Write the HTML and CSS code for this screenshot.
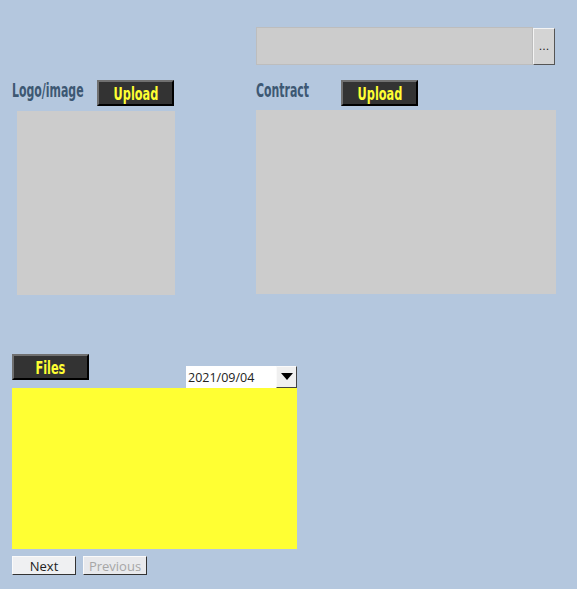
FILE: index.html
```html
<!DOCTYPE html>
<html>
<head>
<meta charset="utf-8">
<link rel="stylesheet" href="styles.css">
</head>
<body>
<div class="page">
  <div class="top-row">
    <div class="path-field"></div>
    <button class="browse">...</button>
  </div>
  <div class="uploads">
    <div class="col col-left">
      <div class="label-row">
        <span class="label-box"><span class="label">Logo/image</span></span>
        <button class="dark-btn"><span class="squeeze">Upload</span></button>
      </div>
      <div class="preview preview-logo"></div>
    </div>
    <div class="col col-right">
      <div class="label-row">
        <span class="label-box"><span class="label">Contract</span></span>
        <button class="dark-btn"><span class="squeeze">Upload</span></button>
      </div>
      <div class="preview preview-contract"></div>
    </div>
  </div>
  <div class="files">
    <div class="files-head">
      <button class="dark-btn files-btn"><span class="squeeze">Files</span></button>
      <div class="date-select">
        <span class="date-text">2021/09/04</span>
        <span class="date-arrow"><svg width="12" height="8" viewBox="0 0 12 8"><path d="M0 0 L12 0 L6 7 Z" fill="#000"/></svg></span>
      </div>
    </div>
    <div class="file-list"></div>
    <div class="nav">
      <button class="nav-btn">Next</button>
      <button class="nav-btn disabled">Previous</button>
    </div>
  </div>
</div>
</body>
</html>
```
FILE: styles.css
```css
html, body {
  margin: 0;
  padding: 0;
}
body {
  background: #b4c7de;
  width: 577px;
  height: 589px;
  overflow: hidden;
  font-family: "Noto Sans", "DejaVu Sans", sans-serif;
}
.page {
  padding-top: 27px;
}
.top-row {
  display: flex;
  align-items: flex-start;
  margin-left: 256px;
  height: 38px;
}
.path-field {
  width: 275px;
  height: 36px;
  background: #cccccc;
  border: 1px solid #bdbdbd;
}
.browse {
  margin: 1px 0 0 0;
  width: 22px;
  height: 37px;
  padding: 0;
  background: #d4d4d4;
  border: 1px solid;
  border-color: #f4f4f4 #555 #555 #f4f4f4;
  font-family: "DejaVu Sans", sans-serif;
  font-size: 11px;
  color: #222;
  line-height: 30px;
}
.uploads {
  display: flex;
  margin-top: 15px;
}
.col-left {
  margin-left: 12px;
  width: 244px;
}
.label-row {
  display: flex;
  align-items: center;
  height: 26px;
}
.label-box {
  width: 85px;
  height: 26px;
  overflow: visible;
  white-space: nowrap;
}
.label {
  display: inline-block;
  font-family: "DejaVu Sans", sans-serif;
  font-stretch: condensed;
  font-weight: bold;
  font-size: 19px;
  line-height: 20px;
  color: #3d5873;
  transform: scaleX(0.64);
  transform-origin: left center;
}
.dark-btn {
  box-sizing: border-box;
  width: 77px;
  height: 26px;
  padding: 0;
  background: #333333;
  border: 2px solid;
  border-color: #707070 #000 #000 #707070;
  color: #ffff33;
  font-family: "DejaVu Sans", sans-serif;
  font-stretch: condensed;
  font-weight: bold;
  font-size: 18px;
  line-height: 19px;
  white-space: nowrap;
  overflow: hidden;
}
.squeeze {
  display: inline-block;
  transform: scaleX(0.7);
  transform-origin: center;
}
.preview {
  background: #cccccc;
}
.preview-logo {
  margin: 5px 0 0 5px;
  width: 158px;
  height: 184px;
}
.preview-contract {
  margin-top: 4px;
  width: 300px;
  height: 184px;
}
.files {
  margin-left: 12px;
  margin-top: 59px;
  width: 285px;
}
.files-head {
  display: flex;
  justify-content: space-between;
  height: 34px;
}
.date-select {
  align-self: flex-end;
  display: flex;
  width: 111px;
  height: 22px;
  background: #fff;
}
.date-text {
  flex: 1;
  padding-left: 2px;
  font-family: "Open Sans", "Noto Sans", sans-serif;
  font-size: 12.5px;
  line-height: 23px;
  color: #222;
}
.date-arrow {
  box-sizing: border-box;
  width: 21px;
  height: 22px;
  background: #f0f0f0;
  border: 1px solid;
  border-color: #fafafa #444 #444 #fafafa;
  display: flex;
  align-items: center;
  justify-content: center;
}
.file-list {
  height: 161px;
  background: #ffff33;
}
.nav {
  display: flex;
  gap: 7px;
  margin-top: 7px;
}
.nav-btn {
  box-sizing: border-box;
  width: 64px;
  height: 19px;
  padding: 0;
  background: #eff0f2;
  border: 1px solid;
  border-color: #fafafa #333 #333 #fafafa;
  font-family: "Open Sans", "Noto Sans", sans-serif;
  font-size: 13px;
  line-height: 16px;
  color: #222;
}
.nav-btn.disabled {
  color: #a6a6a6;
  background: #e8e9ec;
}
```
